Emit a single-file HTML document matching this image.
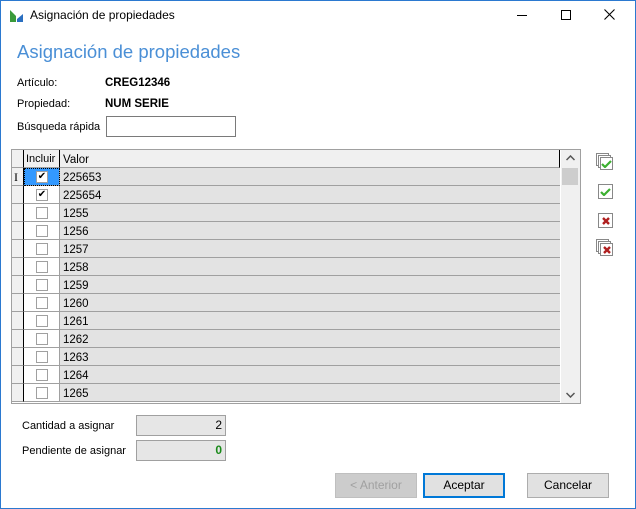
<!DOCTYPE html>
<html><head><meta charset="utf-8"><style>
*{box-sizing:border-box;margin:0;padding:0}
body{width:636px;height:509px;overflow:hidden;background:#fff;font-family:"Liberation Sans",sans-serif;font-size:11px;color:#000;position:relative}
.win{position:absolute;left:0;top:0;width:636px;height:509px;border:1px solid #2b79d0;}
.a{position:absolute}
.grid{left:11px;top:149px;width:570px;height:255px;border:1px solid #a0a0a0;background:#fff}
.row{position:absolute;left:0;height:18px;width:548px}
.ind{position:absolute;left:0;width:12px;height:18px;background:#f0f0f0;border-right:1px solid #000;border-bottom:1px solid #a0a0a0}
.inc{position:absolute;left:12px;width:36px;height:18px;background:#fff;border-right:1px solid #a0a0a0;border-bottom:1px solid #a0a0a0}
.val{position:absolute;left:48px;width:500px;height:18px;background:#e3e3e3;border-bottom:1px solid #a0a0a0;padding-left:3px;padding-top:2px;line-height:16px;font-size:11.5px}
.cb{position:absolute;left:12px;top:3px;width:12px;height:12px;border:1px solid #a0a0a0;background:#fff;font-size:10px;line-height:10px;text-align:center}
.btn{position:absolute;top:473px;width:82px;height:25px;border:1px solid #adadad;background:#e1e1e1;text-align:center;line-height:23px;font-size:12px}
.fld{position:absolute;left:136px;width:90px;height:21px;border:1px solid #a0a0a0;background:#e6e6e6;text-align:right;padding-right:3px;line-height:19px;font-size:12px}
.ic{position:absolute;left:598px;width:15px;height:15px;border:1px solid #888;background:#fff}
</style></head><body>
<div class="win"></div>
<svg class="a" style="left:9px;top:8px" width="16" height="16"><path d="M1 2 L7 8 L7 14 L1 14Z" fill="#3a9a3a"/><path d="M8 11 L14 6 L14 14 L8 14Z" fill="#2a6fc0"/></svg>
<div class="a" style="left:30px;top:8px;font-size:12px">Asignación de propiedades</div>
<div class="a" style="left:517px;top:15px;width:10px;height:1px;background:#000"></div>
<div class="a" style="left:561px;top:10px;width:10px;height:10px;border:1px solid #000"></div>
<svg class="a" style="left:604px;top:9px" width="11" height="11"><path d="M0.5 0.5L10.5 10.5M10.5 0.5L0.5 10.5" stroke="#000" stroke-width="1.1"/></svg>
<div class="a" style="left:17px;top:41px;font-size:18.5px;color:#4a8fd6">Asignación de propiedades</div>
<div class="a" style="left:17px;top:77px">Artículo:</div>
<div class="a" style="left:105px;top:77px;font-weight:bold;font-size:11.5px">CREG12346</div>
<div class="a" style="left:17px;top:98px">Propiedad:</div>
<div class="a" style="left:105px;top:98px;font-weight:bold;font-size:11.5px">NUM SERIE</div>
<div class="a" style="left:17px;top:121px">Búsqueda rápida</div>
<div class="a" style="left:106px;top:116px;width:130px;height:21px;border:1px solid #7a7a7a"></div>
<div class="a grid">
 <div class="row" style="top:0;height:18px">
  <div class="ind" style="background:#f0f0f0;border-right:1px solid #000"></div>
  <div class="inc" style="background:#f0f0f0;border-right:1px solid #000;padding-left:2px;line-height:17px;padding-top:1px">Incluir</div>
  <div class="val" style="background:#f0f0f0;border-right:1px solid #000">Valor</div>
 </div>
 <div id="rows"></div>
 <div class="a" style="left:549px;top:0;width:19px;height:253px;background:#f0f0f0"></div>
 <div class="a" style="left:550px;top:18px;width:16px;height:17px;background:#cdcdcd"></div>
 <svg class="a" style="left:554px;top:5px" width="9" height="6"><path d="M0.5 5L4.5 1L8.5 5" stroke="#555" stroke-width="1.5" fill="none"/></svg>
 <svg class="a" style="left:554px;top:242px" width="9" height="6"><path d="M0.5 1L4.5 5L8.5 1" stroke="#555" stroke-width="1.5" fill="none"/></svg>
</div>
<script>
var v=["225653","225654","1255","1256","1257","1258","1259","1260","1261","1262","1263","1264","1265"],h="";
for(var i=0;i<v.length;i++){var t=18+i*18;var sel=i==0;
h+='<div class="row" style="top:'+t+'px"><div class="ind">'+(sel?'<span style="position:absolute;left:2px;top:2px;font-size:12px;font-family:Liberation Serif">I</span>':'')+'</div><div class="inc" style="'+(sel?'background:#3399ff;outline:1px dotted #000;outline-offset:-1px':'')+'"><div class="cb">'+(i<2?'✔':'')+'</div></div><div class="val">'+v[i]+'</div></div>';}
document.getElementById('rows').innerHTML=h;
</script>
<div class="ic" style="top:157px;left:600px;width:13px;height:13px;box-shadow:-2px -2px 0 -1px #fff,-2px -2px 0 0 #888,-4px -4px 0 -1px #fff,-4px -4px 0 0 #888"></div>
<svg class="a" style="left:601px;top:160px" width="11" height="8"><path d="M1 4L4 7L10 1" stroke="#3cb030" stroke-width="2.2" fill="none"/></svg>
<div class="ic" style="top:184px"></div>
<svg class="a" style="left:600px;top:188px" width="11" height="8"><path d="M1 4L4 7L10 1" stroke="#3cb030" stroke-width="2.2" fill="none"/></svg>
<div class="ic" style="top:213px"></div>
<svg class="a" style="left:602px;top:217px" width="8" height="8"><path d="M1 1L7 7M7 1L1 7" stroke="#b02020" stroke-width="2.4"/></svg>
<div class="ic" style="top:243px;left:600px;width:13px;height:13px;box-shadow:-2px -2px 0 -1px #fff,-2px -2px 0 0 #888,-4px -4px 0 -1px #fff,-4px -4px 0 0 #888"></div>
<svg class="a" style="left:603px;top:246px" width="8" height="8"><path d="M1 1L7 7M7 1L1 7" stroke="#b02020" stroke-width="2.4"/></svg>
<div class="a" style="left:22px;top:420px">Cantidad a asignar</div>
<div class="fld" style="top:415px">2</div>
<div class="a" style="left:22px;top:445px">Pendiente de asignar</div>
<div class="fld" style="top:440px;color:#1a8a1a;font-weight:bold">0</div>
<div class="btn" style="left:335px;color:#a0a0a0;background:#cccccc;border-color:#bfbfbf">&lt; Anterior</div>
<div class="btn" style="left:423px;border:2px solid #0078d7;line-height:21px">Aceptar</div>
<div class="btn" style="left:527px">Cancelar</div>
</body></html>
